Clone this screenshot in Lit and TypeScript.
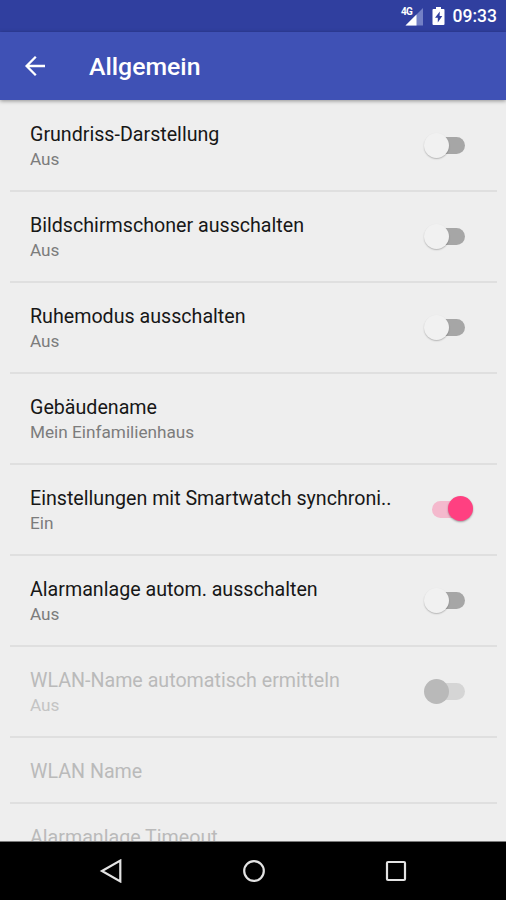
import { LitElement, html, css, svg } from "lit";
import { customElement, property } from "lit/decorators.js";
import { classMap } from "lit/directives/class-map.js";

interface Setting {
  title: string;
  value?: string;
  toggle?: "on" | "off";
  disabled?: boolean;
}

const SETTINGS: Setting[] = [
  { title: "Grundriss-Darstellung", value: "Aus", toggle: "off" },
  { title: "Bildschirmschoner ausschalten", value: "Aus", toggle: "off" },
  { title: "Ruhemodus ausschalten", value: "Aus", toggle: "off" },
  { title: "Gebäudename", value: "Mein Einfamilienhaus" },
  { title: "Einstellungen mit Smartwatch synchroni..", value: "Ein", toggle: "on" },
  { title: "Alarmanlage autom. ausschalten", value: "Aus", toggle: "off" },
  { title: "WLAN-Name automatisch ermitteln", value: "Aus", toggle: "off", disabled: true },
  { title: "WLAN Name", disabled: true },
  { title: "Alarmanlage Timeout", disabled: true },
];

@customElement("setting-switch")
export class SettingSwitch extends LitElement {
  @property({ type: Boolean }) on = false;
  @property({ type: Boolean }) disabled = false;

  static styles = css`
    :host { display: block; flex: none; }
    .switch { display: flex; align-items: center; width: 50px; height: 28px; }
    .thumb { flex: none; width: 25px; height: 25px; margin-left: -1px; border-radius: 50%; background: #f1f1f1; box-shadow: 0 1px 1.5px rgba(0, 0, 0, 0.24); position: relative; }
    .track { flex: none; width: 29px; height: 17px; margin-left: -13px; border-radius: 9px; background: #a6a6a6; }
    .on { flex-direction: row-reverse; }
    .on .thumb { margin: -1px 2px 0 0; background: #ff4081; box-shadow: 0 1px 2px rgba(0, 0, 0, 0.35); }
    .on .track { width: 33px; margin: 0 -17px 0 0; background: #f4b9cd; }
    .disabled .thumb { background: #b9b9b9; box-shadow: none; }
    .disabled .track { background: #d5d5d5; }
  `;

  render() {
    return html`<div class=${classMap({ switch: true, on: this.on, disabled: this.disabled })}>
      <div class="thumb"></div><div class="track"></div>
    </div>`;
  }
}

@customElement("setting-row")
export class SettingRow extends LitElement {
  @property({ attribute: false }) setting!: Setting;

  static styles = css`
    :host { display: block; flex: none; margin: 0 9px 0 10px; border-bottom: 2px solid #dfdfdf; }
    .row { display: flex; height: 89px; box-sizing: border-box; padding: 20px 22px 0 20px; justify-content: space-between; }
    .single { height: 64px; }
    .title { font-size: 19.65px; line-height: 28px; color: #171717; white-space: nowrap; }
    .value { margin-top: -1px; font-size: 17.2px; line-height: 22px; color: #7c7c7c; white-space: nowrap; }
    .disabled .title { color: #bababa; }
    .disabled .value { color: #c4c4c4; }
    setting-switch { margin-top: 10px; }
  `;

  render() {
    const s = this.setting;
    return html`<div class=${classMap({ row: true, single: !s.value, disabled: !!s.disabled })}>
      <div>
        <div class="title">${s.title}</div>
        ${s.value ? html`<div class="value">${s.value}</div>` : ""}
      </div>
      ${s.toggle
        ? html`<setting-switch ?on=${s.toggle === "on"} ?disabled=${!!s.disabled}></setting-switch>`
        : ""}
    </div>`;
  }
}

const signalIcon = svg`
  <path d="M23 6v17.5H5.5z" fill="#7380c5"/>
  <path d="M16.5 12.5v11h-11z" fill="#fff"/>`;

@customElement("app-root")
export class AppRoot extends LitElement {
  static styles = css`
    :host { display: flex; flex-direction: column; width: 506px; height: 900px; overflow: hidden; background: #eee; font-family: Roboto, "Liberation Sans", sans-serif; }
    .status { flex: none; display: flex; align-items: center; height: 32px; box-sizing: border-box; padding-right: 9px; justify-content: flex-end; background: #303f9f; color: #fff; }
    .signal { width: 24px; height: 26px; margin-top: -3px; }
    .network { font-size: 10px; font-weight: 700; letter-spacing: -0.7px; fill: #fff; }
    .battery { width: 13px; height: 20px; margin: 0 8px 0 8px; }
    .clock { font-size: 17.5px; font-weight: 500; line-height: 32px; }
    .toolbar { flex: none; display: flex; align-items: center; height: 68px; padding-left: 24px; background: #3f51b5; color: #fff; box-shadow: 0 1px 4px rgba(0, 0, 0, 0.4); position: relative; }
    .back { width: 22px; height: 22px; }
    .heading { margin: 1px 0 0 43px; font-size: 24.8px; line-height: 32px; font-weight: 500; }
    .list { flex: 1; min-height: 0; display: flex; flex-direction: column; overflow: hidden; padding-top: 1px; box-sizing: border-box; }
    .nav { flex: none; display: flex; align-items: center; height: 59px; box-sizing: border-box; border-top: 1px solid #7a7a7a; background: #000; }
    .nav svg { width: 24px; height: 24px; fill: none; stroke: #e3e3e3; stroke-width: 2.2; }
    .nav-back { margin-left: 99px; }
    .home { margin-left: 119px; }
    .recent { margin-left: 118px; }
  `;

  render() {
    return html`
      <div class="status">
        <svg class="signal" viewBox="0 0 24 26">${signalIcon}<text class="network" x="1" y="13">4G</text></svg>
        <svg class="battery" viewBox="0 0 13 20">
          <path d="M4 1h5v2h2.5q1 0 1 1v14q0 1-1 1h-10q-1 0-1-1V4q0-1 1-1H4z" fill="#fff"/>
          <path d="M7.8 5.5 3 11.8h2.8v4.7L10.3 10H7.6z" fill="#303f9f"/>
        </svg>
        <span class="clock">09:33</span>
      </div>
      <div class="toolbar">
        <svg class="back" viewBox="0 0 22 22" fill="none" stroke="#fff" stroke-width="2.3"><path d="M21 11H3M11.8 1.8 2.6 11l9.2 9.2"/></svg>
        <span class="heading">Allgemein</span>
      </div>
      <div class="list">${SETTINGS.map((s) => html`<setting-row .setting=${s}></setting-row>`)}</div>
      <div class="nav">
        <svg class="nav-back" viewBox="0 0 24 24"><path d="M3 12 21.3 1.6v20.8z"/></svg>
        <svg class="home" viewBox="0 0 24 24"><circle cx="12" cy="12" r="9.8"/></svg>
        <svg class="recent" viewBox="0 0 24 24"><rect x="3" y="3" width="18" height="18" rx="1"/></svg>
      </div>
    `;
  }
}
